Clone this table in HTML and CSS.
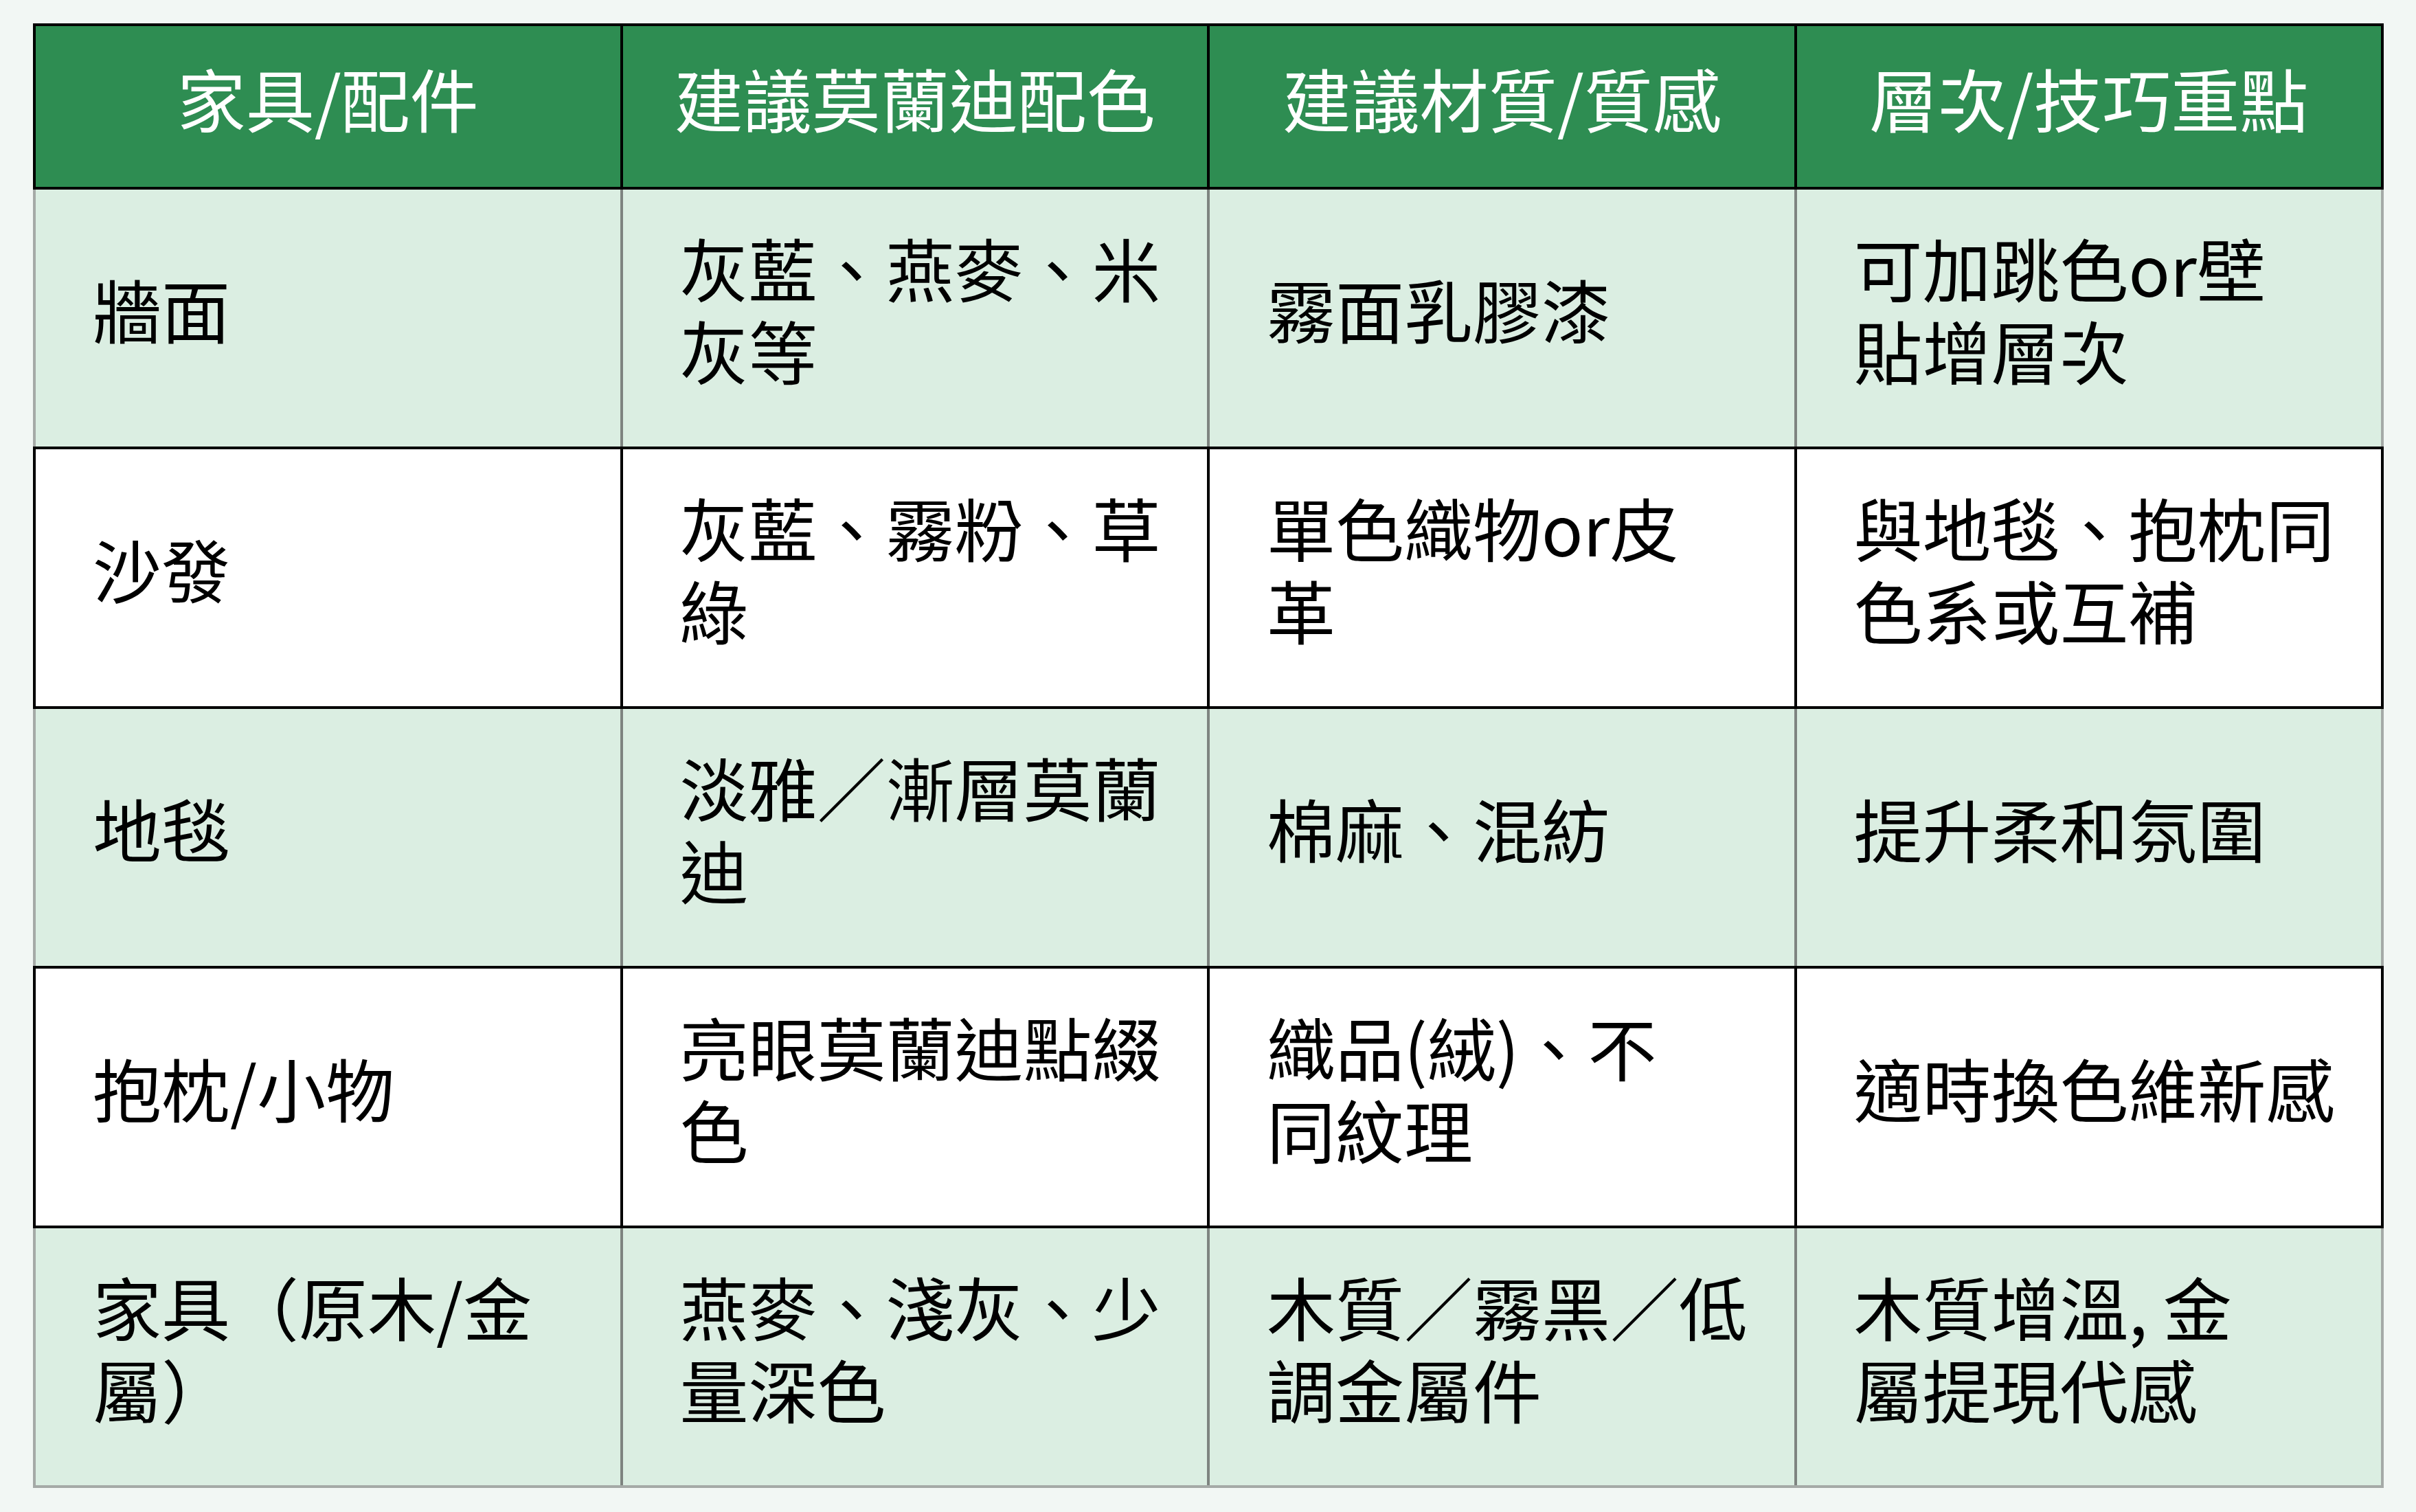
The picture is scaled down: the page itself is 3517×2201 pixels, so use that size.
FILE: index.html
```html
<!DOCTYPE html>
<html lang="zh-Hant">
<head>
<meta charset="utf-8">
<title>莫蘭迪配色建議</title>
<link rel="stylesheet" href="styles.css">
</head>
<body>
<main class="page">
  <table class="grid">
    <colgroup>
      <col class="c"><col class="c"><col class="c"><col class="c">
    </colgroup>
    <thead>
      <tr>
        <th>家具/配件</th>
        <th>建議莫蘭迪配色</th>
        <th>建議材質/質感</th>
        <th>層次/技巧重點</th>
      </tr>
    </thead>
    <tbody>
      <tr class="tint">
        <td>牆面</td>
        <td>灰藍、燕麥、米<br>灰等</td>
        <td>霧面乳膠漆</td>
        <td>可加跳色or壁<br>貼增層次</td>
      </tr>
      <tr class="plain">
        <td>沙發</td>
        <td>灰藍、霧粉、草<br>綠</td>
        <td>單色織物or皮<br>革</td>
        <td>與地毯、抱枕同<br>色系或互補</td>
      </tr>
      <tr class="tint">
        <td>地毯</td>
        <td>淡雅／漸層莫蘭<br>迪</td>
        <td>棉麻、混紡</td>
        <td>提升柔和氛圍</td>
      </tr>
      <tr class="plain">
        <td>抱枕/小物</td>
        <td>亮眼莫蘭迪點綴<br>色</td>
        <td>織品(絨)、不<br>同紋理</td>
        <td>適時換色維新感</td>
      </tr>
      <tr class="tint last">
        <td>家具（原木/金<br>屬）</td>
        <td>燕麥、淺灰、少<br>量深色</td>
        <td>木質／霧黑／低<br>調金屬件</td>
        <td>木質增溫, 金<br>屬提現代感</td>
      </tr>
    </tbody>
  </table>
</main>
</body>
</html>
```
FILE: styles.css
```css
html, body {
  margin: 0;
  padding: 0;
  background: #f2f7f4;
}

.page {
  padding: 34px 47px 36px 48px;
}

.grid {
  width: 3422px;
  table-layout: fixed;
  border-collapse: collapse;
  font-family: "Noto Sans CJK TC", "Noto Sans CJK SC", "Noto Sans", sans-serif;
  font-size: 100px;
  line-height: 120px;
  font-weight: 400;
}

.c {
  width: 25%;
}

.grid th {
  background: #2e8d52;
  color: #ffffff;
  font-weight: 400;
  text-align: center;
  padding: 44px 0 70px;
  border: 4px solid #000;
  white-space: nowrap;
}

.grid td {
  color: #000;
  text-align: left;
  vertical-align: middle;
  padding: 53px 20px 81px 83px;
  white-space: nowrap;
}

.plain td {
  background: #ffffff;
  border: 4px solid #000;
}

.tint td {
  background: #dbeee2;
  border-top: 4px solid #000;
  border-bottom: 4px solid #000;
  border-left: 4px solid #7e8480;
  border-right: 4px solid #7e8480;
}

.tint td:first-child {
  border-left-color: #a5aaa7;
}

.tint td:last-child {
  border-right-color: #a5aaa7;
}

.tint.last td {
  border-bottom-color: #a5aaa7;
}
```
